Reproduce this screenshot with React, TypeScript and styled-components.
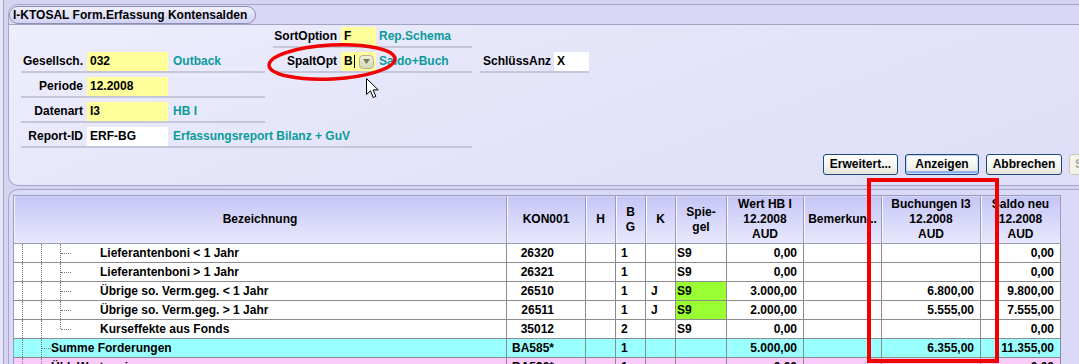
import styled, { createGlobalStyle } from "styled-components";

const GlobalStyle = createGlobalStyle`
  html, body { margin: 0; padding: 0; }
  body {
    background: #d6d6f4;
    font-family: "Liberation Sans", Arial, sans-serif;
    font-size: 12px;
    font-weight: bold;
    color: #000;
    overflow: hidden;
  }
`;

const Screen = styled.div`
  position: relative;
  width: 1079px;
  height: 364px;
  overflow: hidden;
  display: flex;
  background: #d6d6f4;
`;

const SideEdge = styled.div`
  flex: none;
  width: 3px;
  background: #e6e6fa;
  border-right: 1px solid #a4a4c0;
`;

const Workspace = styled.div`
  flex: 1;
  min-width: 0;
  display: flex;
  flex-direction: column;
  gap: 3px;
  padding: 4px 0 0 4px;
  background: #d4d4f2;
`;

const TopPanel = styled.section`
  flex: none;
  box-sizing: border-box;
  width: calc(100% + 40px);
  height: 182px;
  border: 1px solid #a6a6c6;
  border-right: none;
  border-radius: 10px 0 0 10px;
  background: linear-gradient(160deg, #eeeefd 0%, #e2e2f9 60%, #dedef8 100%);
  display: flex;
  flex-direction: column;
  overflow: hidden;
`;

const HeaderStrip = styled.div`
  flex: none;
  height: 19px;
  display: flex;
  align-items: center;
  background: #d8d8f6;
  border-bottom: 1px solid #a2a2c2;
`;

const TitlePill = styled.div`
  box-sizing: border-box;
  height: 18px;
  line-height: 16px;
  padding: 0 8px 0 3px;
  border: 1px solid #8e8eb2;
  border-radius: 9px;
  background: linear-gradient(#f0f0fe, #d2d2f4);
  white-space: nowrap;
`;

const Form = styled.div`
  display: grid;
  grid-template-columns: 244px 199px 109px;
  grid-template-rows: repeat(5, 21px);
  column-gap: 8px;
  row-gap: 4px;
  padding: 2px 0 0 12px;
`;

const Field = styled.div<{ $col: number; $row: number; $span?: number }>`
  grid-column: ${(p) => p.$col} / span ${(p) => p.$span ?? 1};
  grid-row: ${(p) => p.$row};
  display: flex;
  align-items: flex-start;
  border-bottom: 2px solid #c6c6da;
  white-space: nowrap;
`;

const Label = styled.span<{ $w: number; $gap?: number }>`
  flex: none;
  width: ${(p) => p.$w}px;
  margin-right: ${(p) => p.$gap ?? 4}px;
  text-align: right;
  line-height: 19px;
`;

const InputBox = styled.div<{ $w: number; $white?: boolean }>`
  flex: none;
  box-sizing: border-box;
  width: ${(p) => p.$w}px;
  height: 19px;
  line-height: 19px;
  padding-left: 3px;
  background: ${(p) => (p.$white ? "#ffffff" : "#ffff9c")};
  display: flex;
  align-items: center;
`;

const Caret = styled.span`
  width: 1px;
  height: 13px;
  margin-left: 1px;
  background: #000;
`;

const DropButton = styled.span`
  margin-left: auto;
  margin-right: 2px;
  box-sizing: border-box;
  width: 15px;
  height: 14px;
  border: 1px solid #b4b494;
  border-radius: 4px;
  background: linear-gradient(#eef0d8, #d6d8bc);
  display: flex;
  align-items: center;
  justify-content: center;
`;

const Desc = styled.span`
  margin-left: 5px;
  line-height: 19px;
  color: #0b9b9b;
`;

const ButtonBar = styled.div`
  display: flex;
  gap: 7px;
  margin-top: 6px;
  padding-left: 814px;
`;

const Button = styled.div<{ $w: number; $default?: boolean; $disabled?: boolean }>`
  flex: none;
  box-sizing: border-box;
  width: ${(p) => p.$w}px;
  height: 21px;
  line-height: 19px;
  text-align: center;
  border: 1px solid ${(p) => (p.$disabled ? "#c9c7ba" : "#1c4a80")};
  border-radius: 3px;
  color: ${(p) => (p.$disabled ? "#aca899" : "#000")};
  background: ${(p) => (p.$disabled ? "#f4f3ea" : "linear-gradient(#ffffff, #f4f3ee 60%, #e6e3d6)")};
  box-shadow: ${(p) => (p.$default ? "inset 0 0 0 1px #c2d6f6, inset 0 -2px 0 1px #8eb0ee" : "none")};
`;

const TablePanel = styled.section`
  flex: 1;
  width: calc(100% + 40px);
  border: 1px solid #a6a6c6;
  border-right: none;
  border-bottom: none;
  border-radius: 10px 0 0 0;
  background: #dadaf8;
  padding: 5px 0 0 4px;
  overflow: hidden;
`;

const Grid = styled.table`
  border-collapse: collapse;
  table-layout: fixed;
  width: 1048px;
  border-top: 1px solid #8aa0c8;
  border-left: 1px solid #8aa0c8;
`;

const Head = styled.th`
  height: 47px;
  padding: 0 2px;
  line-height: 15px;
  text-align: center;
  vertical-align: middle;
  font-weight: bold;
  background: linear-gradient(#c6c6f6, #e8e8fd);
  border: 1px solid #9c9cb8;
  box-shadow: inset 1px 0 0 #f6f6ff;
  white-space: nowrap;
  overflow: hidden;
`;

type Tone = "plain" | "sum" | "sub";

const Row = styled.tr<{ $tone: Tone }>`
  background: ${(p) => (p.$tone === "sum" ? "#99ffff" : p.$tone === "sub" ? "#f9ccf9" : "#ffffff")};
`;

const Cell = styled.td<{ $align?: "left" | "right"; $pad?: number; $green?: boolean }>`
  height: 18px;
  padding: 0;
  padding-left: ${(p) => (p.$align === "right" ? 0 : p.$pad ?? 5)}px;
  padding-right: ${(p) => (p.$align === "right" ? p.$pad ?? 6 : 0)}px;
  line-height: 18px;
  text-align: ${(p) => p.$align ?? "left"};
  border: 1px solid #8c8c8c;
  background: ${(p) => (p.$green ? "#99ff33" : "transparent")};
  white-space: nowrap;
  overflow: hidden;
`;

const TreeCell = styled.td`
  height: 18px;
  padding: 0;
  border: 1px solid #8c8c8c;
  border-left: none;
`;

const TreeLine = styled.div`
  display: flex;
  height: 18px;
  padding-left: 8px;
`;

const Rail = styled.span`
  flex: none;
  width: 18px;
  border-left: 1px dotted #7c7c7c;
`;

const Elbow = styled.span<{ $w: number; $stub: number; $last?: boolean }>`
  position: relative;
  flex: none;
  width: ${(p) => p.$w}px;

  &::before {
    content: "";
    position: absolute;
    left: 0;
    top: 0;
    bottom: ${(p) => (p.$last ? "9px" : "0")};
    border-left: 1px dotted #7c7c7c;
  }

  &::after {
    content: "";
    position: absolute;
    left: 1px;
    top: 9px;
    width: ${(p) => p.$stub}px;
    border-top: 1px dotted #7c7c7c;
  }
`;

const NodeText = styled.span`
  line-height: 18px;
  white-space: nowrap;
`;

const RedFrame = styled.div`
  position: absolute;
  left: 867px;
  top: 178px;
  width: 132px;
  height: 185px;
  box-sizing: border-box;
  border: 4px solid #f00000;
  pointer-events: none;
`;

const Overlay = styled.svg`
  position: absolute;
  pointer-events: none;
`;

type Line = {
  name: string;
  level: "leaf" | "sum";
  last?: boolean;
  tone: Tone;
  kon: string;
  bg: string;
  k?: string;
  sp?: string;
  green?: boolean;
  wert?: string;
  buch?: string;
  saldo?: string;
};

const lines: Line[] = [
  { name: "Lieferantenboni < 1 Jahr", level: "leaf", tone: "plain", kon: "26320", bg: "1", sp: "S9", wert: "0,00", saldo: "0,00" },
  { name: "Lieferantenboni > 1 Jahr", level: "leaf", tone: "plain", kon: "26321", bg: "1", sp: "S9", wert: "0,00", saldo: "0,00" },
  { name: "Übrige so. Verm.geg. < 1 Jahr", level: "leaf", tone: "plain", kon: "26510", bg: "1", k: "J", sp: "S9", green: true, wert: "3.000,00", buch: "6.800,00", saldo: "9.800,00" },
  { name: "Übrige so. Verm.geg. > 1 Jahr", level: "leaf", tone: "plain", kon: "26511", bg: "1", k: "J", sp: "S9", green: true, wert: "2.000,00", buch: "5.555,00", saldo: "7.555,00" },
  { name: "Kurseffekte aus Fonds", level: "leaf", last: true, tone: "plain", kon: "35012", bg: "2", sp: "S9", wert: "0,00", saldo: "0,00" },
  { name: "Summe Forderungen", level: "sum", tone: "sum", kon: "BA585*", bg: "1", wert: "5.000,00", buch: "6.355,00", saldo: "11.355,00" },
  { name: "Übl. Wertpapiere", level: "sum", tone: "sub", kon: "BA590*", bg: "1", wert: "0,00", saldo: "0,00" },
];

const widths = [493, 79, 30, 30, 30, 51, 77, 78, 99, 80];

const TreeLabel = ({ line }: { line: Line }) => (
  <TreeLine>
    <Rail />
    {line.level === "leaf" ? (
      <>
        <Rail />
        <Elbow $w={40} $stub={10} $last={line.last} />
      </>
    ) : (
      <Elbow $w={10} $stub={9} />
    )}
    <NodeText>{line.name}</NodeText>
  </TreeLine>
);

export default function App() {
  return (
    <>
      <GlobalStyle />
      <Screen>
        <SideEdge />
        <Workspace>
          <TopPanel>
            <HeaderStrip>
              <TitlePill>I-KTOSAL Form.Erfassung Kontensalden</TitlePill>
            </HeaderStrip>
            <Form>
              <Field $col={2} $row={1}>
                <Label $w={64}>SortOption</Label>
                <InputBox $w={35}>F</InputBox>
                <Desc style={{ marginLeft: 3 }}>Rep.Schema</Desc>
              </Field>
              <Field $col={1} $row={2}>
                <Label $w={62}>Gesellsch.</Label>
                <InputBox $w={81}>032</InputBox>
                <Desc>Outback</Desc>
              </Field>
              <Field $col={2} $row={2}>
                <Label $w={64}>SpaltOpt</Label>
                <InputBox $w={35}>
                  B<Caret />
                  <DropButton>
                    <svg width="7" height="5" viewBox="0 0 7 5">
                      <path d="M0 0 H7 L3.5 5 Z" fill="#7a7a62" />
                    </svg>
                  </DropButton>
                </InputBox>
                <Desc style={{ marginLeft: 3 }}>Saldo+Buch</Desc>
              </Field>
              <Field $col={3} $row={2}>
                <Label $w={71} $gap={3}>SchlüssAnz</Label>
                <InputBox $w={35} $white>X</InputBox>
              </Field>
              <Field $col={1} $row={3}>
                <Label $w={62}>Periode</Label>
                <InputBox $w={81}>12.2008</InputBox>
              </Field>
              <Field $col={1} $row={4}>
                <Label $w={62}>Datenart</Label>
                <InputBox $w={81}>I3</InputBox>
                <Desc>HB I</Desc>
              </Field>
              <Field $col={1} $row={5} $span={2}>
                <Label $w={62}>Report-ID</Label>
                <InputBox $w={81} $white>ERF-BG</InputBox>
                <Desc>Erfassungsreport Bilanz + GuV</Desc>
              </Field>
            </Form>
            <ButtonBar>
              <Button $w={75}>Erweitert...</Button>
              <Button $w={74} $default>Anzeigen</Button>
              <Button $w={76}>Abbrechen</Button>
              <Button $w={70} $disabled>Speichern</Button>
            </ButtonBar>
          </TopPanel>

          <TablePanel>
            <Grid>
              <colgroup>
                {widths.map((w, i) => (
                  <col key={i} style={{ width: w }} />
                ))}
              </colgroup>
              <thead>
                <tr>
                  <Head>Bezeichnung</Head>
                  <Head>KON001</Head>
                  <Head>H</Head>
                  <Head>B<br />G</Head>
                  <Head>K</Head>
                  <Head>Spie-<br />gel</Head>
                  <Head>Wert HB I<br />12.2008<br />AUD</Head>
                  <Head>Bemerkun...</Head>
                  <Head>Buchungen I3<br />12.2008<br />AUD</Head>
                  <Head>Saldo neu<br />12.2008<br />AUD</Head>
                </tr>
              </thead>
              <tbody>
                {lines.map((l, i) => (
                  <Row key={i} $tone={l.tone}>
                    <TreeCell>
                      <TreeLabel line={l} />
                    </TreeCell>
                    <Cell $align="right" $pad={31}>{l.kon}</Cell>
                    <Cell />
                    <Cell $pad={5}>{l.bg}</Cell>
                    <Cell $pad={5}>{l.k}</Cell>
                    <Cell $pad={1} $green={l.green}>{l.sp}</Cell>
                    <Cell $align="right">{l.wert}</Cell>
                    <Cell />
                    <Cell $align="right">{l.buch}</Cell>
                    <Cell $align="right">{l.saldo}</Cell>
                  </Row>
                ))}
              </tbody>
            </Grid>
          </TablePanel>
        </Workspace>

        <RedFrame />
        <Overlay width="136" height="44" style={{ left: 264, top: 40 }} viewBox="0 0 136 44">
          <ellipse cx="68" cy="22" rx="63" ry="17" fill="none" stroke="#f00000" strokeWidth="3.5" transform="rotate(-3 68 22)" />
        </Overlay>
        <Overlay width="14" height="21" style={{ left: 366, top: 78 }} viewBox="0 0 14 21">
          <path d="M0.5 0.5 V16.5 L4.5 12.8 L7.2 19.5 L9.8 18.4 L7.1 11.9 L12.2 11.9 Z" fill="#fff" stroke="#000" strokeWidth="1" strokeLinejoin="miter" />
        </Overlay>
      </Screen>
    </>
  );
}
